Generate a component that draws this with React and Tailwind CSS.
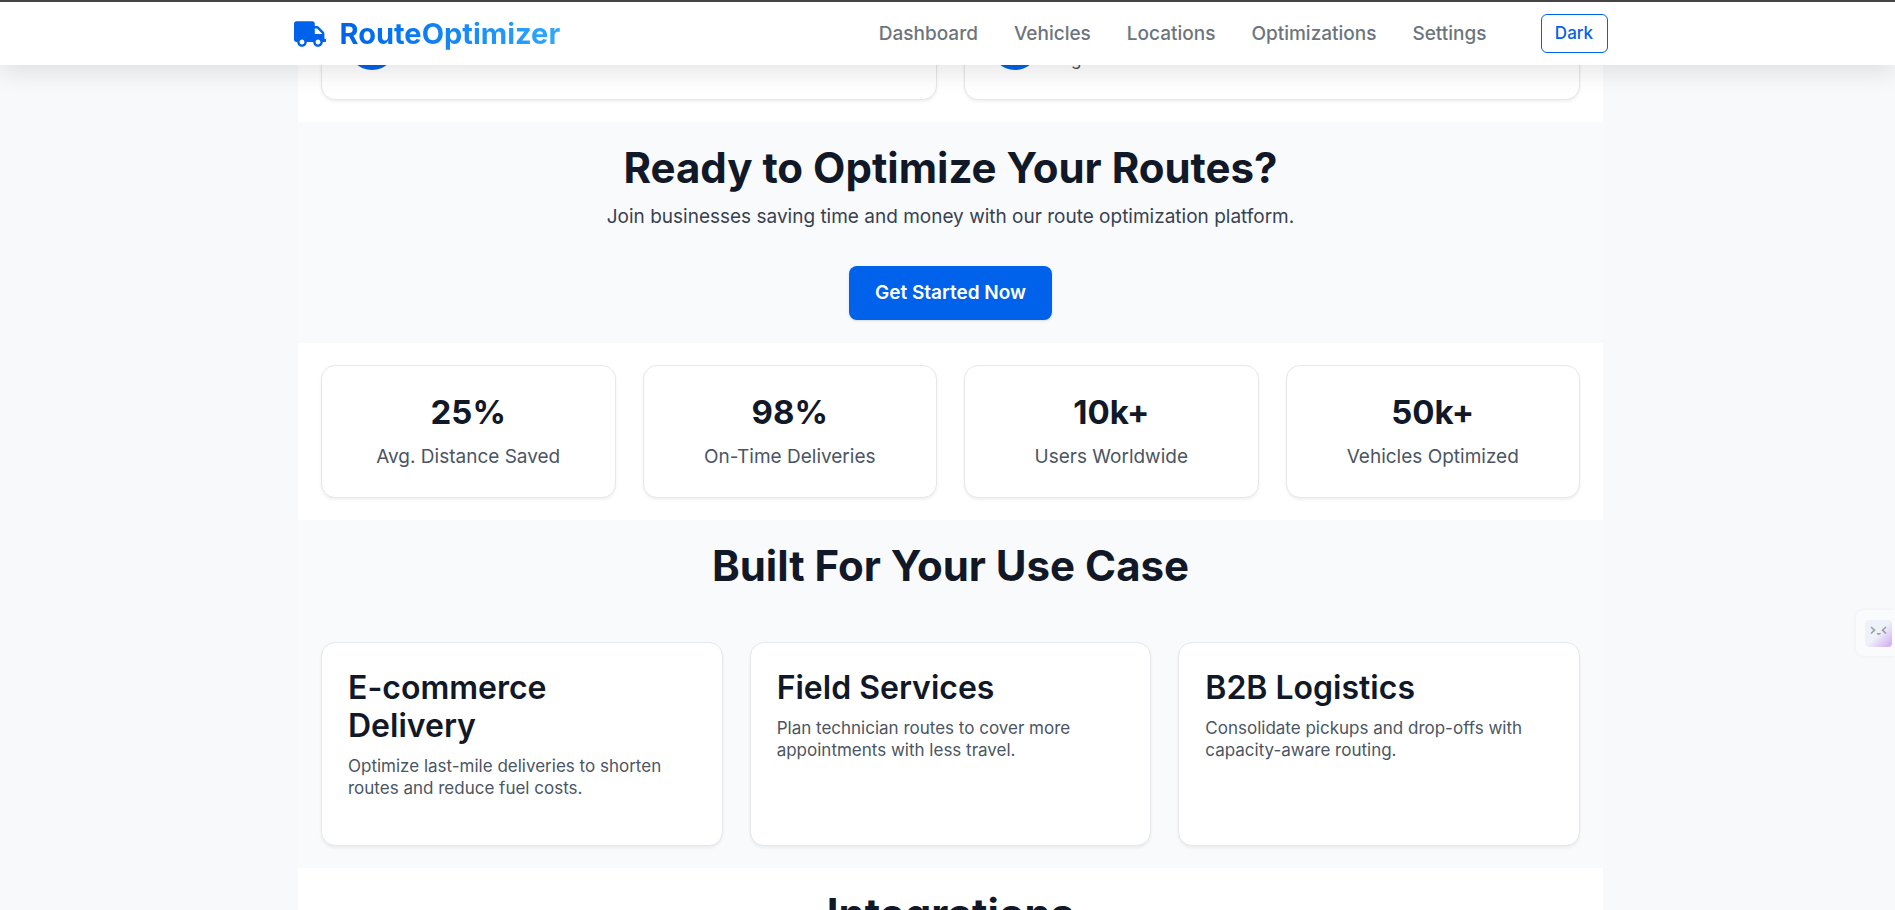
import React from "react";
import { FaTruck } from "react-icons/fa";

const NAV = ["Dashboard", "Vehicles", "Locations", "Optimizations", "Settings"];

const STATS = [
  ["25%", "Avg. Distance Saved"],
  ["98%", "On-Time Deliveries"],
  ["10k+", "Users Worldwide"],
  ["50k+", "Vehicles Optimized"],
];

const CASES = [
  ["E-commerce Delivery", "Optimize last-mile deliveries to shorten routes and reduce fuel costs."],
  ["Field Services", "Plan technician routes to cover more appointments with less travel."],
  ["B2B Logistics", "Consolidate pickups and drop-offs with capacity-aware routing."],
];

function Header() {
  return (
    <header className="relative z-10 shrink-0 border-t-2 border-[#444444] bg-white pl-1.5 shadow-[0_8px_24px_rgba(0,0,0,0.1)]">
      <div className="mx-auto flex h-[63px] max-w-[1314px] items-center justify-between">
        <a href="#" className="flex items-center gap-3.5 text-[29px] leading-8 font-bold">
          <FaTruck className="h-[26px] w-8 text-[#0062ea]" />
          <span className="bg-linear-to-r from-[#0062ea] to-[#2fa8ff] bg-clip-text text-transparent">RouteOptimizer</span>
        </a>
        <div className="flex items-center gap-[54px]">
          <nav className="flex gap-9 text-[19px] leading-6 font-medium text-[#6c757d]">
            {NAV.map((item) => (
              <a key={item} href="#">{item}</a>
            ))}
          </nav>
          <button type="button" className="h-[39px] w-[67px] rounded-md border border-[#0062ea] pb-0.5 text-[17px] leading-6 font-medium text-[#0062ea]">Dark</button>
        </div>
      </div>
    </header>
  );
}

function Card({ className, children }) {
  return (
    <article className={"rounded-[14px] border border-[#e5e7eb] bg-white shadow-[0_2px_3px_rgba(0,0,0,0.06)] " + className}>
      {children}
    </article>
  );
}

function SectionTitle({ children }) {
  return <h2 className="text-center text-[42px] leading-[48px] font-bold">{children}</h2>;
}

export default function App() {
  return (
    <div className="flex h-screen flex-col overflow-hidden bg-[#f8f9fb] font-['Inter','Liberation_Sans',sans-serif] text-[#111827]">
      <Header />
      <main className="pl-1.5">
        <div className="mx-auto max-w-[1305px] bg-[#f9fafc]">
          <section className="-mt-12 grid grid-cols-2 gap-[27px] bg-white px-[23px] pb-[22px]">
            <Card className="h-[83px] px-[26px]">
              <span className="mt-1 block size-12 rounded-full bg-[#0062ea]" />
            </Card>
            <Card className="flex h-[83px] items-start gap-8 px-[26px]">
              <span className="mt-1 block size-12 rounded-full bg-[#0062ea]" />
              <p className="mt-[30px] text-[17px] leading-[22px] text-[#4b5563]">g</p>
            </Card>
          </section>

          <section className="flex flex-col items-center px-[23px] py-[22px] text-center">
            <SectionTitle>Ready to Optimize Your Routes?</SectionTitle>
            <p className="mt-[11px] text-[19px] leading-7 text-[#374151]">Join businesses saving time and money with our route optimization platform.</p>
            <button type="button" className="mt-[35px] mb-px h-[54px] w-[203px] rounded-lg bg-[#0062ea] text-[19px] font-semibold text-white shadow-sm">Get Started Now</button>
          </section>

          <section className="grid grid-cols-4 gap-[27px] bg-white px-[23px] py-[22px]">
            {STATS.map(([value, label]) => (
              <Card key={label} className="h-[133px] pt-[26px] text-center">
                <p className="text-[33px] leading-10 font-bold">{value}</p>
                <p className="mt-[11px] text-[19px] leading-7 text-[#4b5563]">{label}</p>
              </Card>
            ))}
          </section>

          <section className="px-[23px] py-[22px]">
            <SectionTitle>Built For Your Use Case</SectionTitle>
            <div className="mt-[52px] grid grid-cols-3 gap-[27px]">
              {CASES.map(([title, text]) => (
                <Card key={title} className="h-[204px] px-[26px] py-[26px]">
                  <h3 className="max-w-[320px] text-[32px] leading-[38px] font-semibold">{title}</h3>
                  <p className="mt-2.5 text-[17px] leading-[22px] text-[#4b5563]">{text}</p>
                </Card>
              ))}
            </div>
          </section>

          <section className="bg-white px-[23px] py-[22px]">
            <SectionTitle>Integrations</SectionTitle>
          </section>
        </div>
      </main>
      <button type="button" aria-label="Assistant" className="absolute top-[610px] right-0 flex h-[46px] w-[39px] items-center justify-end rounded-l-lg bg-[#fafbfd] pr-[3px] shadow-[0_0_4px_rgba(0,0,0,0.05)]">
        <span className="block size-[27px] rounded bg-linear-to-br from-[#eef2f8] from-50% to-[#cfa8ee]">
          <svg viewBox="0 0 27 27" className="size-full" fill="none" stroke="#9a9ca6" strokeWidth="1.6">
            <path d="M6 7l3.5 3.2L6 13.500M21 7l-3.500 3.200L21 13.500M12 13.200q1.700 1.800 3.500 0" />
          </svg>
        </span>
      </button>
    </div>
  );
}
